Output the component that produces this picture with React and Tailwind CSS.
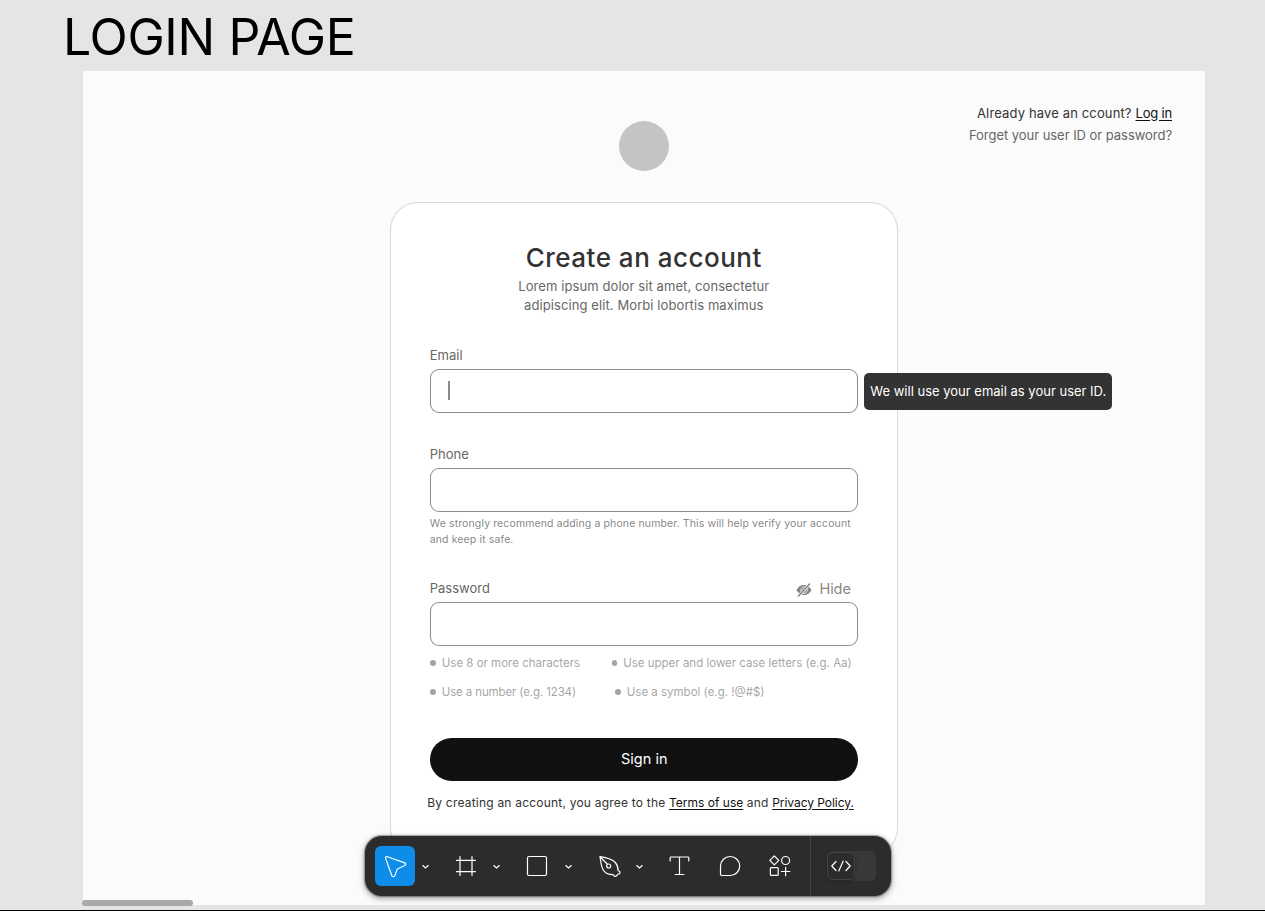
function Field({ label, aside, children }) {
  return (
    <div>
      <div className="flex h-5 items-center justify-between">
        <label className="text-[13px] leading-5 text-[#666666]">{label}</label>
        {aside}
      </div>
      <div className="mt-[4px] flex h-[44px] items-center rounded-[9px] border border-[#666666]/75 bg-white pl-[17.5px]">
        {children}
      </div>
    </div>
  );
}

function Hint({ className, children }) {
  return (
    <li className={`flex items-center gap-[6px] ${className}`}>
      <span className="size-[6px] rounded-full bg-[#a3a3a3]" />
      <span>{children}</span>
    </li>
  );
}

function Chevron() {
  return (
    <svg className="h-10 w-5" viewBox="0 0 20 40" fill="none" stroke="#ffffff" strokeWidth="1.2">
      <path d="M7.5 19.2 10.5 22l3-2.8" />
    </svg>
  );
}

function Icon({ className = "", children }) {
  return (
    <svg
      className={`size-10 shrink-0 ${className}`}
      viewBox="0 0 40 40"
      fill="none"
      stroke="#ffffff"
      strokeWidth="1.2"
      strokeLinecap="round"
      strokeLinejoin="round"
    >
      {children}
    </svg>
  );
}

function Toolbar() {
  return (
    <div className="absolute top-[836px] left-[365px] flex h-[60px] w-[526px] items-center rounded-[17px] bg-[#2c2c2c] pl-[10px] shadow-[0_0_1px_0.5px_rgba(0,0,0,0.3),0_2px_6px_rgba(0,0,0,0.45)]">
      <div className="flex gap-[11px]">
        <div className="flex">
          <Icon className="rounded-[6px] bg-[#0d8ce9]">
            <path d="M10.6 12.4 16.9 29.7Q17.4 30.8 18.5 30.7 19.5 30.6 19.8 29.6L22.3 23 29.8 19.5Q30.8 18.8 30.7 18.1 30.7 17.3 29.8 16.9L12.3 10.7Q10.1 10.4 10.6 12.4Z" />
          </Icon>
          <Chevron />
        </div>
        <div className="flex">
          <Icon>
            <path d="M14 10.5v19M26 10.5v19M10.5 14.3h19M10.5 25.7h19" />
          </Icon>
          <Chevron />
        </div>
        <div className="flex gap-[1px]">
          <Icon>
            <rect x="10.5" y="10.5" width="19" height="19" rx="1.5" />
          </Icon>
          <Chevron />
        </div>
        <div className="flex">
          <Icon>
            <path d="M11 10.7C16.500 11.600 23 13 26.300 16.500 28.500 19 29.100 21 29 24.200L30.800 25.600Q31.300 26.600 30.600 27.600L29.300 28Q28.300 28.300 28.100 29.300L26.900 30.300Q26 30.700 25.300 30L24 28.700C19.400 28.600 15.900 27 14.200 24 12 20 11.800 15 11 10.700Z" />
            <path d="M11.300 11 18.200 18" />
            <circle cx="19.700" cy="20" r="2" />
          </Icon>
          <Chevron />
        </div>
      </div>
      <div className="ml-[11px] flex gap-[10px]">
        <Icon>
          <path d="M10.2 15v-3.2q0-.8.8-.8h17q.8 0 .8.8V15M19.5 11v17.5M15.200 28.500h8.600" />
        </Icon>
        <Icon>
          <path d="M20.2 10.5a9.5 9.5 0 1 1 0 19h-8.5q-1.2 0-1.2-1.200V20a9.600 9.600 0 0 1 9.700-9.500Z" />
        </Icon>
        <Icon>
          <path d="M14.3 9.800 18.800 14.300 14.300 18.800 9.800 14.300Z" />
          <circle cx="25.600" cy="14.500" r="4" />
          <rect x="10.400" y="21.600" width="7.800" height="7.800" rx="1" />
          <path d="M25.600 21.300v8.400M21.400 25.500h8.400" />
        </Icon>
      </div>
      <div className="ml-[10px] h-full w-px bg-[#444444]" />
      <div className="ml-[16px] h-[30px] w-[49px] rounded-[6px] bg-[#383838]">
        <div className="mt-[1px] flex h-7 w-7 items-center justify-center rounded-[6px] border border-[#444444] bg-[#2c2c2c] shadow-[0_1px_3px_rgba(0,0,0,0.4)]">
          <svg className="h-4 w-5 shrink-0" viewBox="0 0 20 16" fill="none" stroke="#ffffff" strokeWidth="1.2" strokeLinecap="round" strokeLinejoin="round">
            <path d="M5 3.5.8 8 5 12.500M15 3.500 19.200 8 15 12.500M12.200 3 7.800 13" />
          </svg>
        </div>
      </div>
    </div>
  );
}

export default function App() {
  return (
    <div className="relative flex h-[911px] w-[1265px] flex-col overflow-hidden border-b border-black bg-[#e5e5e5] font-['Inter',sans-serif]">
      <h1 className="ml-[63px] h-[70.5px] shrink-0 pt-[7px] text-[50px] leading-[60px] font-normal tracking-[-0.35px] whitespace-nowrap text-black">
        LOGIN PAGE
      </h1>

      <main className="ml-[82.5px] h-[834.5px] w-[1122.5px] shrink-0 bg-[#fbfbfb]">
        <header className="grid h-[131.5px] grid-cols-[1fr_auto_1fr]">
          <div />
          <div className="mt-[50px] size-[50px] rounded-full bg-[#c4c4c4]" />
          <div className="mt-[31px] mr-[33px] text-right text-[13px] leading-[22px]">
            <p className="tracking-[0.14px] text-[#333333]">
              Already have an ccount?{" "}
              <a className="tracking-[-0.18px] text-[#111111] underline underline-offset-2">Log in</a>
            </p>
            <p className="tracking-[-0.04px] text-[#666666]">Forget your user ID or password?</p>
          </div>
        </header>

        <section className="mx-auto h-[654px] w-[508px] rounded-[28px] border border-[#666666]/25 bg-white px-[39px] pt-[37px]">
          <h2 className="h-9 text-center text-[26px] leading-9 font-medium tracking-[0.5px] text-[#333333]">
            Create an account
          </h2>
          <p className="mt-[1px] text-center text-[13px] leading-[19px] tracking-[0.09px] text-[#666666]">
            Lorem ipsum dolor sit amet, consectetur
            <br />
            adipiscing elit. Morbi lobortis maximus
          </p>

          <form className="pt-[30px]">
            <div className="relative">
              <Field label="Email">
                <span className="mb-[2px] h-[19px] w-[1.5px] bg-[#8a8a8a]" />
              </Field>
              <div className="absolute top-[28px] left-[434.5px] flex h-[37px] w-[248px] items-center justify-center rounded-[5px] bg-[#333333] text-[13px] whitespace-nowrap text-white">
                We will use your email as your user ID.
              </div>
            </div>

            <div className="mt-[31px]">
              <Field label="Phone" />
              <p className="mt-[4px] text-[10.5px] leading-[15.5px] tracking-[0.12px] text-[#666666]/80">
                We strongly recommend adding a phone number. This will help verify your account
                <br />
                and keep it safe.
              </p>
            </div>

            <div className="mt-[30.5px]">
              <Field
                label="Password"
                aside={
                  <span className="mt-[2px] mr-[7px] flex items-center gap-[8px] text-[14.5px] leading-5 tracking-[-0.1px] text-[#666666]/80">
                    <svg className="mt-[2px] h-[14px] w-4" viewBox="0 0 16 14">
                      <path fill="#858585" d="M.5 7.200C2.200 3.800 4.800 2 8 2s5.800 1.800 7.500 5.200C13.800 10.300 11.200 12 8 12S2.200 10.300.5 7.200Z" />
                      <path fill="none" stroke="#ffffff" strokeWidth="0.8" d="M5.600 9.300A3.400 3.400 0 0 1 8.600 3.700M10.500 5A3.400 3.400 0 0 1 7.400 10.500" />
                      <path stroke="#ffffff" strokeWidth="3" d="M2.200 13.400 13.800.8" />
                      <path stroke="#858585" strokeWidth="1.600" strokeLinecap="round" d="M2.400 13 13.600 1" />
                    </svg>
                    Hide
                  </span>
                }
              />
              <ul className="mt-[7px] flex flex-wrap gap-y-2 text-[11.5px] leading-[21px] whitespace-nowrap text-[#666666]/60">
                <Hint className="w-[182px]">Use 8 or more characters</Hint>
                <Hint className="w-[240px]">Use upper and lower case letters (e.g. Aa)</Hint>
                <Hint className="w-[185px] tracking-[-0.13px]">Use a number (e.g. 1234)</Hint>
                <Hint className="w-[240px]">Use a symbol (e.g. !@#$)</Hint>
              </ul>
            </div>

            <button
              type="button"
              className="mt-[35px] flex h-[43.5px] w-full items-center justify-center rounded-full bg-[#111111] pl-px text-[14.5px] text-white"
            >
              Sign in
            </button>
            <p className="mt-[11.5px] -ml-[2.5px] text-[12px] leading-5 tracking-[0.21px] whitespace-nowrap text-[#333333]">
              By creating an account, you agree to the{" "}
              <a className="tracking-normal text-[#111111] underline underline-offset-2">Terms of use</a> and{" "}
              <a className="tracking-[-0.05px] text-[#111111] underline underline-offset-2">Privacy Policy.</a>
            </p>
          </form>
        </section>
      </main>

      <div className="absolute top-[900px] left-[82px] h-[6px] w-[111px] rounded-full bg-[#a9a9a9]" />
      <Toolbar />
    </div>
  );
}
